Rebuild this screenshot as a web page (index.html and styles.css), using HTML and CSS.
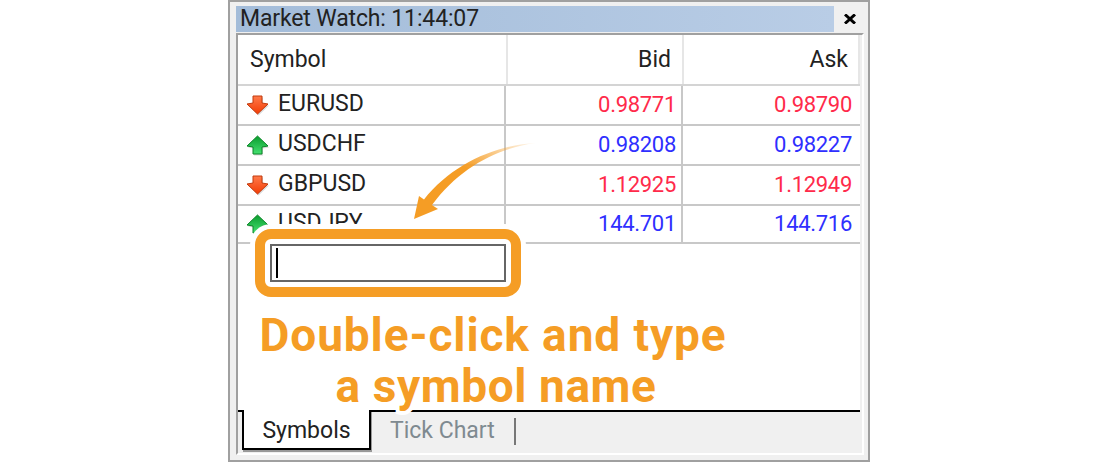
FILE: index.html
```html
<!DOCTYPE html>
<html lang="en">
<head>
  <meta charset="UTF-8">
  <title>Market Watch</title>
  <link rel="stylesheet" href="styles.css">
</head>
<body>
  <div class="window">
    <div class="titlebar">
      <div class="title">Market Watch: 11:44:07</div>
      <svg class="close" width="12" height="10" viewBox="0 0 12 10"><path d="M1 0.5 L11 9.5 M11 0.5 L1 9.5" stroke="#000" stroke-width="3"/></svg>
    </div>

    <div class="frame">
      <div class="list">
        <div class="row head">
          <div class="cell sym">Symbol</div>
          <div class="cell num">Bid</div>
          <div class="cell num">Ask</div>
        </div>
        <div class="row">
          <div class="cell sym"><svg class="arrow" width="24" height="22" viewBox="0 0 24 22"><use href="#down"/></svg>EURUSD</div>
          <div class="cell num red">0.98771</div>
          <div class="cell num red">0.98790</div>
        </div>
        <div class="row">
          <div class="cell sym"><svg class="arrow" width="24" height="22" viewBox="0 0 24 22"><use href="#up"/></svg>USDCHF</div>
          <div class="cell num blue">0.98208</div>
          <div class="cell num blue">0.98227</div>
        </div>
        <div class="row">
          <div class="cell sym"><svg class="arrow" width="24" height="22" viewBox="0 0 24 22"><use href="#down"/></svg>GBPUSD</div>
          <div class="cell num red">1.12925</div>
          <div class="cell num red">1.12949</div>
        </div>
        <div class="row">
          <div class="cell sym"><svg class="arrow" width="24" height="22" viewBox="0 0 24 22"><use href="#up"/></svg>USDJPY</div>
          <div class="cell num blue">144.701</div>
          <div class="cell num blue">144.716</div>
        </div>
      </div>

      <div class="tabs">
        <div class="tab active">Symbols</div>
        <div class="tab">Tick Chart</div>
      </div>
    </div>

    <div class="callout">
      <div class="edit"><span class="caret"></span></div>
    </div>
    <svg class="pointer" width="130" height="80" viewBox="0 0 130 80">
      <defs>
        <linearGradient id="fade" x1="1" y1="0" x2="0" y2="1">
          <stop offset="0" stop-color="#f59d25" stop-opacity="0.05"/>
          <stop offset="0.45" stop-color="#f59d25"/>
        </linearGradient>
      </defs>
      <path d="M126 1 C88 6 50 25 22 63 L28 67 L4 77 L9 54 L14 57.5 C42 22 86 3 126 1 Z" fill="url(#fade)"/>
    </svg>
    <div class="note">
      <div>Double-click and type</div>
      <div class="second">a symbol name</div>
    </div>
  </div>

  <svg width="0" height="0" class="defs">
    <defs>
      <linearGradient id="redfill" x1="0" y1="0" x2="0" y2="1">
        <stop offset="0" stop-color="#ff7a4a"/>
        <stop offset="1" stop-color="#f23c05"/>
      </linearGradient>
      <linearGradient id="greenfill" x1="0" y1="0" x2="0" y2="1">
        <stop offset="0" stop-color="#0a9c2e"/>
        <stop offset="1" stop-color="#45e070"/>
      </linearGradient>
      <g id="down">
        <path d="M2 10 L8 9 L8 2 L17 2 L17 9 L23 10 L12.5 20 Z" fill="#000" opacity="0.15" transform="translate(1 1.5)"/>
        <path d="M2 10 L8 9 L8 2 L17 2 L17 9 L23 10 L12.5 20 Z" fill="url(#redfill)" stroke="#c23a0c" stroke-width="1"/>
      </g>
      <g id="up">
        <path d="M12.5 2 L23 12 L17 13 L17 20 L8 20 L8 13 L2 12 Z" fill="#000" opacity="0.15" transform="translate(1 1.5)"/>
        <path d="M12.5 2 L23 12 L17 13 L17 20 L8 20 L8 13 L2 12 Z" fill="url(#greenfill)" stroke="#0a8526" stroke-width="1"/>
      </g>
    </defs>
  </svg>
</body>
</html>
```

FILE: styles.css
```css
html, body {
  margin: 0;
  height: 100%;
  background: #fff;
}

body {
  display: flex;
  justify-content: center;
  padding-right: 2px;
  box-sizing: border-box;
  font-family: Roboto, "Noto Sans", sans-serif;
  color: #222;
  overflow: hidden;
}

.defs {
  position: absolute;
}

.window {
  position: relative;
  box-sizing: border-box;
  width: 642px;
  height: 462px;
  background: #f0f0f0;
  border: 2px solid #a0a0a0;
  padding: 4px 4px 5px 6px;
  display: flex;
  flex-direction: column;
}

.titlebar {
  display: flex;
  align-items: center;
  height: 26px;
  flex: none;
}

.title {
  width: 598px;
  height: 26px;
  line-height: 25px;
  padding-left: 4px;
  box-sizing: border-box;
  font-size: 23px;
  letter-spacing: -0.14px;
  background: linear-gradient(to right, #a3bcd9, #b9cde6);
  white-space: nowrap;
}

.close {
  margin-left: 10px;
}

.frame {
  flex: 1;
  margin-top: 1px;
  display: flex;
  flex-direction: column;
  min-height: 0;
  border-top: 2px solid #a0a0a0;
  border-left: 2px solid #a0a0a0;
  border-right: 2px solid #fff;
  border-bottom: 2px solid #fff;
}

.list {
  flex: 1;
  margin-right: 2px;
  background: #fff;
}

.row {
  display: grid;
  grid-template-columns: 268px 177px 177px;
  height: 40px;
  box-sizing: border-box;
  border-bottom: 2px solid #c8c8c8;
  font-size: 22px;
}

.row:last-child {
  height: 38px;
}

.head {
  height: 51px;
  grid-template-columns: 270px 176px 176px;
  border-bottom-color: #d4d4d4;
  font-size: 23px;
}

.cell {
  display: flex;
  align-items: center;
  box-sizing: border-box;
  border-right: 2px solid #c8c8c8;
  white-space: nowrap;
}

.head .cell {
  border-right-color: #e6e6e6;
}

.cell:last-child {
  border-right: 0;
}

.head .cell:last-child {
  border-right: 2px solid #e6e6e6;
}

.sym {
  padding-left: 12px;
  font-size: 23px;
}

.row:not(.head) .sym {
  padding-left: 7px;
  padding-bottom: 4px;
}

.arrow {
  margin-top: 4px;
  margin-right: 9px;
  flex: none;
}

.num {
  justify-content: flex-end;
  padding-right: 5px;
  padding-bottom: 2px;
  letter-spacing: -0.3px;
}

.num:last-child {
  padding-right: 8px;
}

.head .num {
  padding-right: 11px;
  padding-bottom: 0;
  letter-spacing: 0;
}

.head .num:last-child {
  padding-right: 10px;
}

.red {
  color: #ff2a4a;
}

.blue {
  color: #2f2fff;
}

.tabs {
  display: flex;
  flex: none;
  height: 41px;
  border-top: 2px solid #000;
  padding-left: 4px;
  margin-right: 2px;
  font-size: 23px;
}

.tab {
  height: 27px;
  margin-top: 6px;
  padding: 0 19px 0 19px;
  line-height: 25px;
  color: #7f8a90;
  border-right: 2px solid #777;
}

.tab.active {
  box-sizing: border-box;
  width: 129px;
  height: 40px;
  margin-top: -2px;
  padding: 0;
  line-height: 41px;
  text-align: center;
  background: #fff;
  color: #222;
  border-left: 2px solid #000;
  border-right: 2px solid #000;
  border-bottom: 2px solid #000;
  box-shadow: 1px 2px 0 #999;
}

.callout {
  position: absolute;
  left: 25px;
  top: 227px;
  box-sizing: border-box;
  width: 266px;
  height: 68px;
  padding: 5px;
  background: #fff;
  border: 10px solid #f59d25;
  border-radius: 16px;
  box-shadow: 0 0 0 5px #fff;
}

.edit {
  box-sizing: border-box;
  height: 38px;
  border: 2px solid #666;
  padding: 2px 4px;
  background: #fff;
}

.caret {
  display: block;
  width: 2px;
  height: 30px;
  background: #000;
}

.pointer {
  position: absolute;
  left: 180px;
  top: 140px;
}

.note {
  position: absolute;
  left: 0;
  right: 112px;
  top: 308px;
  text-align: center;
  font-weight: bold;
  font-size: 46px;
  line-height: 51px;
  letter-spacing: 0.9px;
  color: #f59d25;
  -webkit-text-stroke: 8px #fff;
  paint-order: stroke fill;
}

.second {
  padding-left: 6px;
  letter-spacing: 0.6px;
}
```
